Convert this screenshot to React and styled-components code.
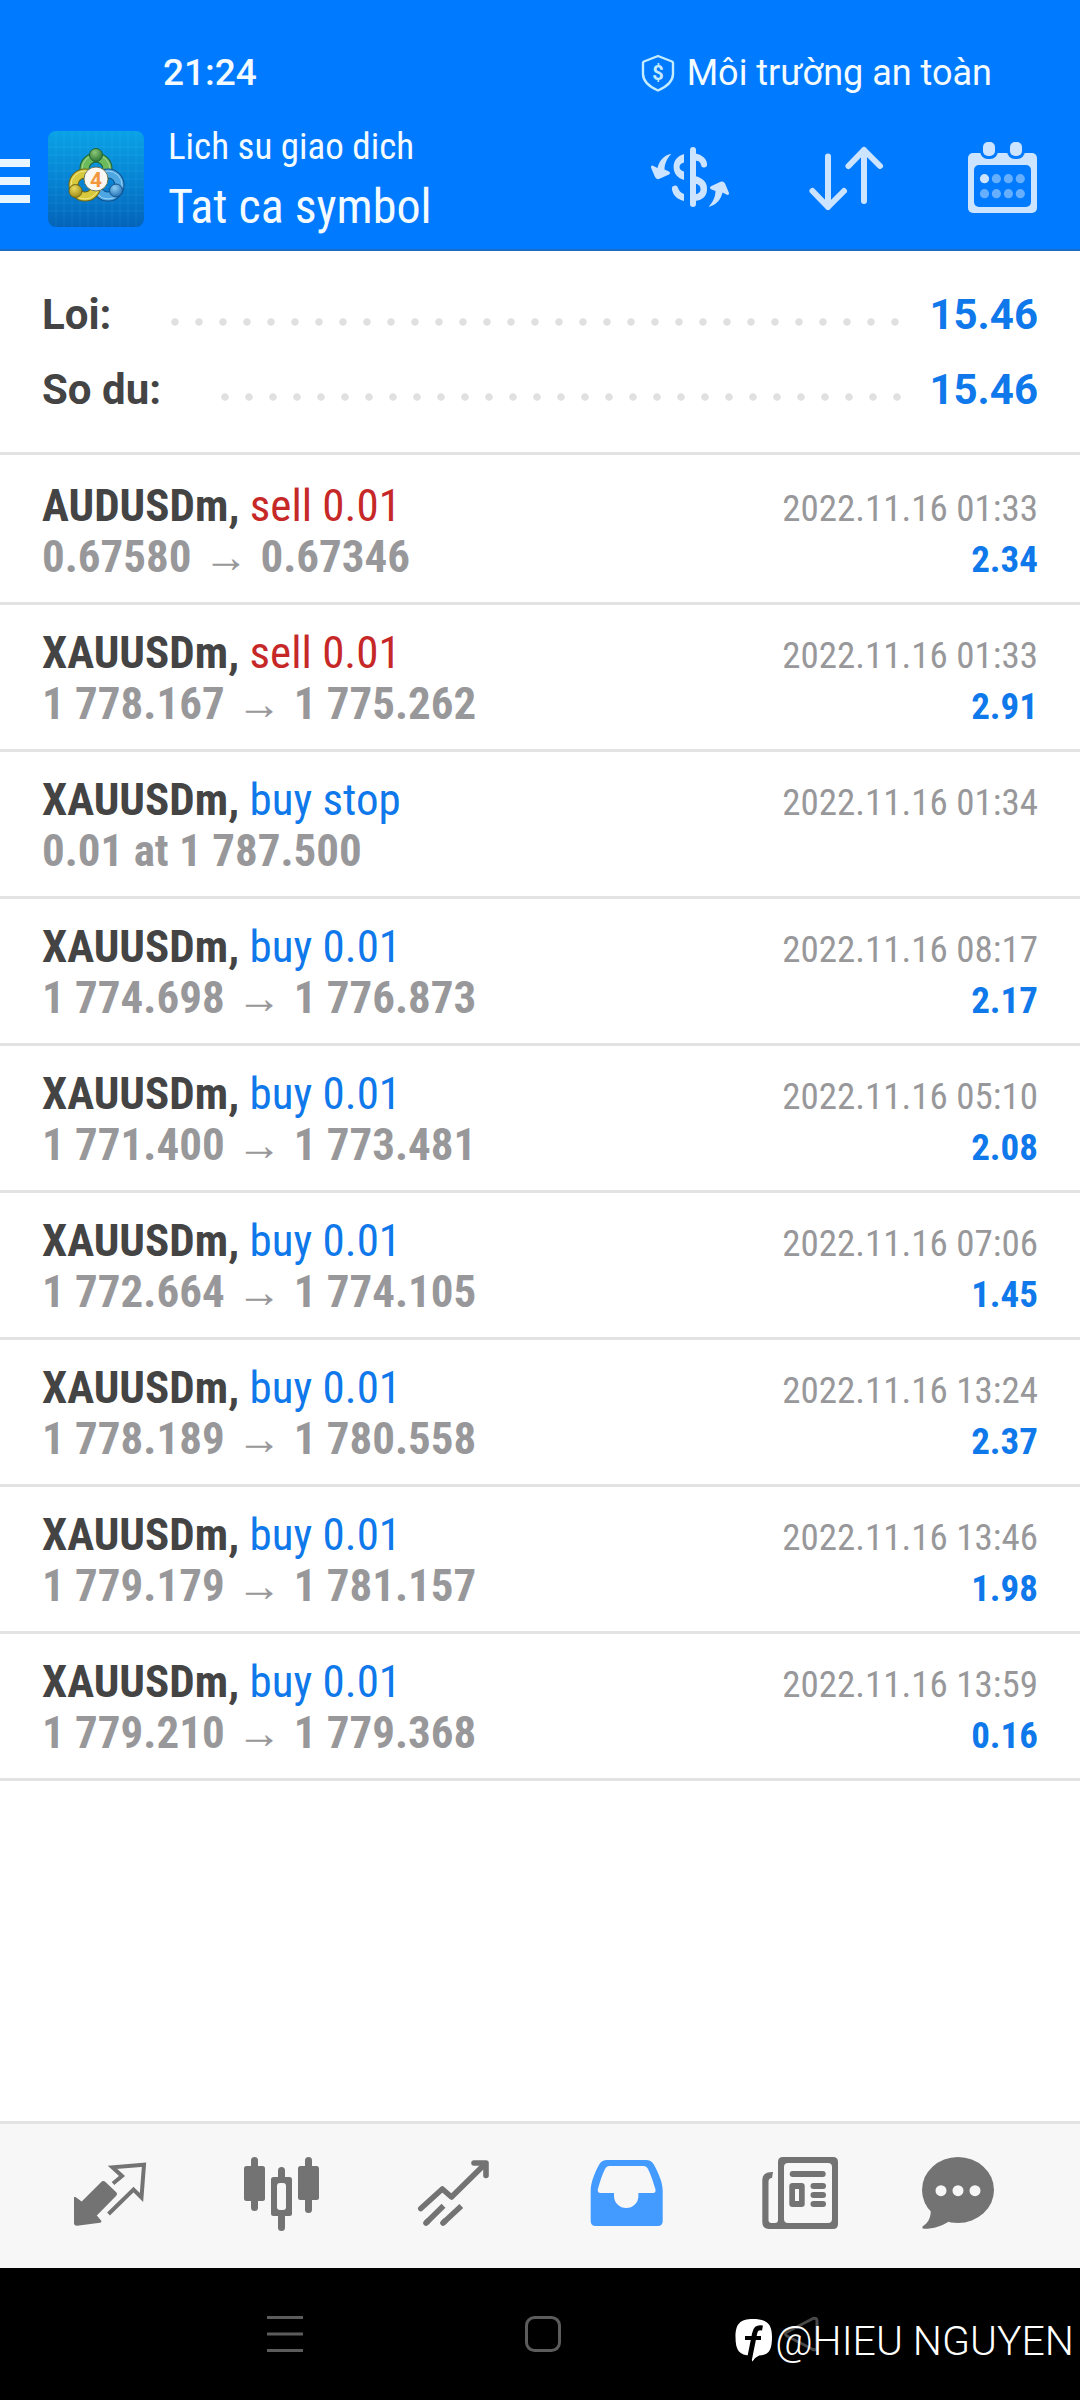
import React from 'react'
import styled, { createGlobalStyle } from 'styled-components'

const trades = [
  { symbol: 'AUDUSDm', side: 'sell', label: 'sell 0.01', from: '0.67580', to: '0.67346', time: '2022.11.16 01:33', profit: '2.34' },
  { symbol: 'XAUUSDm', side: 'sell', label: 'sell 0.01', from: '1 778.167', to: '1 775.262', time: '2022.11.16 01:33', profit: '2.91' },
  { symbol: 'XAUUSDm', side: 'buy', label: 'buy stop', from: '0.01 at 1 787.500', time: '2022.11.16 01:34' },
  { symbol: 'XAUUSDm', side: 'buy', label: 'buy 0.01', from: '1 774.698', to: '1 776.873', time: '2022.11.16 08:17', profit: '2.17' },
  { symbol: 'XAUUSDm', side: 'buy', label: 'buy 0.01', from: '1 771.400', to: '1 773.481', time: '2022.11.16 05:10', profit: '2.08' },
  { symbol: 'XAUUSDm', side: 'buy', label: 'buy 0.01', from: '1 772.664', to: '1 774.105', time: '2022.11.16 07:06', profit: '1.45' },
  { symbol: 'XAUUSDm', side: 'buy', label: 'buy 0.01', from: '1 778.189', to: '1 780.558', time: '2022.11.16 13:24', profit: '2.37' },
  { symbol: 'XAUUSDm', side: 'buy', label: 'buy 0.01', from: '1 779.179', to: '1 781.157', time: '2022.11.16 13:46', profit: '1.98' },
  { symbol: 'XAUUSDm', side: 'buy', label: 'buy 0.01', from: '1 779.210', to: '1 779.368', time: '2022.11.16 13:59', profit: '0.16' },
]

const totals = [
  { label: 'Loi:', value: '15.46' },
  { label: 'So du:', value: '15.46' },
]

function ShieldIcon() {
  return (
    <svg width="34" height="38" viewBox="0 0 34 38" fill="none" aria-hidden="true">
      <path d="M17 2 L31 7.5 Q32 8 32 9 V20 C32 28 25 33 17 36.5 C9 33 2 28 2 20 V9 Q2 8 3 7.5 Z" stroke="#c4ecff" strokeWidth="2.4" strokeLinejoin="round" />
      <text x="17" y="26" textAnchor="middle" fontFamily="Roboto, sans-serif" fontSize="20" fontWeight="700" fill="#c4ecff">$</text>
    </svg>
  )
}

function LogoIcon() {
  return (
    <svg width="96" height="96" viewBox="0 0 96 96" aria-hidden="true">
      <defs>
        <linearGradient id="tile" x1="0" y1="0" x2="0" y2="1">
          <stop offset="0" stopColor="#0aa2e6" />
          <stop offset="0.5" stopColor="#0684d4" />
          <stop offset="1" stopColor="#0463b8" />
        </linearGradient>
        <radialGradient id="green" cx="0.4" cy="0.3" r="0.8">
          <stop offset="0" stopColor="#8cc878" />
          <stop offset="1" stopColor="#1f6a2c" />
        </radialGradient>
        <radialGradient id="yellow" cx="0.4" cy="0.3" r="0.8">
          <stop offset="0" stopColor="#ecdc60" />
          <stop offset="1" stopColor="#94800e" />
        </radialGradient>
        <radialGradient id="blue" cx="0.4" cy="0.3" r="0.8">
          <stop offset="0" stopColor="#8ccdf4" />
          <stop offset="1" stopColor="#1565ac" />
        </radialGradient>
      </defs>
      <rect width="96" height="96" rx="8" fill="url(#tile)" />
      <path d="M8 0V96M16 0V96M24 0V96M32 0V96M40 0V96M48 0V96M56 0V96M64 0V96M72 0V96M80 0V96M88 0V96M0 16H96M0 24H96M0 32H96M0 40H96M0 48H96M0 56H96M0 64H96M0 72H96M0 80H96" stroke="#5fd0f0" strokeOpacity="0.14" />
      <g fill="none">
        <circle cx="48" cy="38" r="11.5" stroke="#1d6430" strokeWidth="10" />
        <circle cx="48" cy="38" r="11.5" stroke="#6cba5c" strokeWidth="8" />
        <circle cx="48" cy="38" r="14" stroke="#a8d898" strokeWidth="1" />
        <circle cx="60" cy="54" r="11.5" stroke="#12508c" strokeWidth="10" />
        <circle cx="60" cy="54" r="11.5" stroke="#4ea6e2" strokeWidth="8" />
        <circle cx="60" cy="54" r="14" stroke="#9cd4f6" strokeWidth="1" />
        <circle cx="37" cy="54" r="11.5" stroke="#6c6412" strokeWidth="10" />
        <circle cx="37" cy="54" r="11.5" stroke="#d8c83c" strokeWidth="8" />
        <circle cx="37" cy="54" r="14" stroke="#f0e88c" strokeWidth="1" />
      </g>
      <circle cx="48" cy="24" r="6.5" fill="url(#green)" stroke="#1d6430" />
      <circle cx="27.5" cy="60" r="6.5" fill="url(#yellow)" stroke="#6c6412" />
      <circle cx="68" cy="59.5" r="6.5" fill="url(#blue)" stroke="#12508c" />
      <circle cx="48" cy="48" r="12" fill="#fbf7f2" stroke="#6a7a5a" strokeWidth="1" />
      <text x="48" y="55.5" textAnchor="middle" fontFamily="Roboto, sans-serif" fontSize="21" fontWeight="700" fill="#f2983c">4</text>
    </svg>
  )
}

const turnArrow = 'M29.5 22.7 C22 24 17 30 15.5 37 L10.5 34.5 Q8.6 34.6 9 36.5 L13 46 Q14.5 49 17.5 47.8 L27 43.4 Q29 41.8 27 40.4 L22.5 38.5 C22.5 33 25 27 29.5 22.7 Z'

function CurrencyIcon() {
  return (
    <svg width="96" height="96" viewBox="0 0 96 96" fill="#cce4ff" aria-hidden="true">
      <path d="M51 19 V73" stroke="#cce4ff" strokeWidth="6" strokeLinecap="round" />
      <path d="M53 22.5 C60 23.5 65 28 65 33 A3 3 0 0 1 59 34 C58.5 31 57 30 53 29.5 Z" />
      <path d="M42 23 C35 25 31.6 30 31.6 36 C31.6 42 35 47 42 49 V40.5 C39 39.5 37.5 38 37.5 36 C37.5 34 39 32 42 31.5 Z" />
      <path d="M30 58.5 A3 3 0 0 1 36 57 C37 60 39 62 42 63 V70 C35 68.5 31 64 30 58.5 Z" />
      <path d="M53 45 C61 47 65 51 65 58 C65 65 61 69 53 70 V63.5 C57 62.5 58.5 61 58.5 58 C58.5 55 57 53.5 53 52.5 Z" />
      <path d={turnArrow} />
      <path d={turnArrow} transform="rotate(180 48 49.3)" />
    </svg>
  )
}

function SortIcon() {
  return (
    <svg width="96" height="96" viewBox="0 0 96 96" fill="none" stroke="#cce4ff" strokeWidth="6" strokeLinecap="round" strokeLinejoin="round" aria-hidden="true">
      <path d="M30 25.5 V76 M14.5 60 L30 76 L46 60" />
      <path d="M66 70 V19 M50.5 35 L66 19 L82 35" />
    </svg>
  )
}

function CalendarIcon() {
  return (
    <svg width="96" height="96" viewBox="0 0 96 96" aria-hidden="true">
      <rect x="14" y="22" width="69" height="60" rx="5" fill="#cce4ff" />
      <rect x="20" y="34" width="57" height="42" rx="5" fill="#007aff" />
      <rect x="26" y="8" width="18" height="20" rx="8" fill="#007aff" />
      <rect x="53" y="8" width="18" height="20" rx="8" fill="#007aff" />
      <rect x="29" y="11" width="12" height="14" rx="5" fill="#cce4ff" />
      <rect x="56" y="11" width="12" height="14" rx="5" fill="#cce4ff" />
      {[47.7, 62.7].map((y) =>
        [30.5, 42.4, 54.4, 66.3].map((x) => (
          <circle key={`${x}-${y}`} cx={x} cy={y} r="4.6" fill={x === 30.5 && y === 47.7 ? '#cce4ff' : '#66afff'} />
        ))
      )}
    </svg>
  )
}

function QuotesIcon() {
  return (
    <svg width="96" height="96" viewBox="0 0 96 96" aria-hidden="true">
      <path d="M12 49 L13.5 49 L19.7 53.5 L39 34.3 Q41 32 43.5 34 L54 44 Q56 46.3 54 48 L34.8 67.5 L39.5 73 Q39.5 74.5 38 74.7 L15 77.8 Q12 77.8 12 75 Z" fill="currentColor" />
      <path d="M51 35.5 L60 28 L50.5 19.3 L82 16.7 L79.5 49.5 L71.5 41.5 L46.5 66" fill="none" stroke="currentColor" strokeWidth="4" />
    </svg>
  )
}

function ChartIcon() {
  return (
    <svg width="96" height="96" viewBox="0 0 96 96" fill="currentColor" aria-hidden="true">
      <rect x="17" y="9" width="7" height="54" rx="3.5" />
      <rect x="10" y="18" width="21" height="35" rx="2.5" />
      <rect x="44" y="19" width="7" height="64" rx="3.5" />
      <rect x="37" y="29" width="21" height="39" rx="2.5" />
      <rect x="43" y="35" width="9" height="27" rx="3" fill="#f7f7f7" />
      <rect x="71" y="9" width="7" height="56" rx="3.5" />
      <rect x="64" y="18" width="21" height="34" rx="2.5" />
    </svg>
  )
}

function TradeIcon() {
  return (
    <svg width="96" height="96" viewBox="0 0 96 96" fill="none" stroke="currentColor" strokeWidth="5.6" strokeLinecap="round" strokeLinejoin="round" aria-hidden="true">
      <path d="M14.8 60.5 L36.3 41 L45.5 49 L79 16" />
      <path d="M68 15 H80 V27.5" />
      <path d="M20 75 L22 73 M37 75 L39 73" />
      <path d="M20 75 L37.5 57.7 M37 75 L55.3 58" strokeLinecap="butt" />
    </svg>
  )
}

function HistoryIcon() {
  return (
    <svg width="96" height="96" viewBox="0 0 96 96" fill="currentColor" aria-hidden="true">
      <path fillRule="evenodd" d="M29 12 H68 Q73 12 75.5 16 C80 24 84.7 34 84.7 43 V73 Q84.7 78 79.7 78 H17.7 Q12.7 78 12.7 73 V43 C12.7 34 17 24 21.5 16 Q24 12 29 12 Z M31.5 18 Q28.5 18 27 21 C24 27 21.5 35 19.8 41.5 Q19.5 45 22.5 45 H36 V48 A12.2 12 0 0 0 60.4 48 V45 H75 Q78 45 77.5 41.5 C75.5 35 73 27 70 21 Q68.5 18 65.5 18 Z" />
    </svg>
  )
}

function NewsIcon() {
  return (
    <svg width="96" height="96" viewBox="0 0 96 96" fill="currentColor" aria-hidden="true">
      <path fillRule="evenodd" d="M33 9 H83 Q88 9 88 14 V76 Q88 81 83 81 H19 Q12.3 81 12.3 74 V32 Q12.3 24 22 24 H23 L22 30 Q18.5 30 18.5 34 V72 Q18.5 75 21.5 75 H25 Q28 75 28 72 V14 Q28 9 33 9 Z M38 15 Q34 15 34 19 V71 Q34 75 38 75 H78 Q82 75 82 71 V19 Q82 15 78 15 Z" />
      <rect x="39.7" y="23" width="36" height="6" rx="3" />
      <path fillRule="evenodd" d="M42.5 35 H51.5 Q54.7 35 54.7 38 V56 Q54.7 59 51.5 59 H42.5 Q39.3 59 39.3 56 V38 Q39.3 35 42.5 35 Z M45 41 V53 H49 V41 Z" />
      <rect x="60.5" y="35" width="15.5" height="6" rx="3" />
      <rect x="60.5" y="44" width="15.5" height="6" rx="3" />
      <rect x="60.5" y="53" width="15.5" height="6" rx="3" />
    </svg>
  )
}

function ChatIcon() {
  return (
    <svg width="96" height="96" viewBox="0 0 96 96" fill="currentColor" aria-hidden="true">
      <ellipse cx="36" cy="42" rx="36" ry="33" />
      <path d="M8.7 62 C9 70 6 75 0.6 78.5 Q-0.2 80.6 2 80.8 C12 80.8 20 78 27 73.5 Z" />
      <g fill="#f7f7f7">
        <circle cx="19" cy="42.7" r="5.5" />
        <circle cx="36" cy="42.7" r="5.5" />
        <circle cx="53" cy="42.7" r="5.5" />
      </g>
    </svg>
  )
}

function FacebookIcon() {
  return (
    <svg width="38" height="44" viewBox="0 0 38 44" aria-hidden="true">
      <path d="M18 0 C32 0 37 5 37 18 C37 31 34 36 24 36.5 Q20 38 17.3 42.5 L16 36.5 C4 36.5 0.5 31 0.5 18 C0.5 5 5 0 18 0 Z" fill="#fff" />
      <path d="M27.5 9 C22 8 20.5 10 19.5 15 L14.5 40" fill="none" stroke="#000" strokeWidth="5" />
      <path d="M10 19 H26" stroke="#000" strokeWidth="4" />
      <path d="M19.5 31 L17.3 42.5 Q20 38 25 35.5 Z" fill="#fff" />
    </svg>
  )
}

const tabs = [
  { name: 'Quotes', Icon: QuotesIcon },
  { name: 'Chart', Icon: ChartIcon },
  { name: 'Trade', Icon: TradeIcon },
  { name: 'History', Icon: HistoryIcon, active: true },
  { name: 'News', Icon: NewsIcon },
  { name: 'Messages', Icon: ChatIcon },
]

function App() {
  return (
    <Page>
      <GlobalStyle />
      <Header>
        <StatusBar>
          <Clock>21:24</Clock>
          <Secure>
            <ShieldIcon />
            Môi trường an toàn
          </Secure>
        </StatusBar>
        <AppBar>
          <MenuButton aria-label="Menu">
            <span />
            <span />
            <span />
          </MenuButton>
          <LogoIcon />
          <Titles>
            <Subtitle>Lich su giao dich</Subtitle>
            <Title>Tat ca symbol</Title>
          </Titles>
          <Actions>
            <IconButton aria-label="Currency"><CurrencyIcon /></IconButton>
            <IconButton aria-label="Sort"><SortIcon /></IconButton>
            <IconButton aria-label="Period"><CalendarIcon /></IconButton>
          </Actions>
        </AppBar>
      </Header>

      <Summary>
        {totals.map((total) => (
          <SummaryRow key={total.label}>
            <dt>{total.label}</dt>
            <Leader aria-hidden="true" />
            <dd>{total.value}</dd>
          </SummaryRow>
        ))}
      </Summary>

      <TradeList>
        {trades.map((trade, index) => (
          <Trade key={index}>
            <Line>
              <Symbol>
                {trade.symbol}, <Side $side={trade.side}>{trade.label}</Side>
              </Symbol>
              <Time>{trade.time}</Time>
            </Line>
            <Line>
              <Prices>
                {trade.from}
                {trade.to && <Arrow>→</Arrow>}
                {trade.to}
              </Prices>
              <Profit>{trade.profit}</Profit>
            </Line>
          </Trade>
        ))}
      </TradeList>

      <TabBar>
        {tabs.map(({ name, Icon, active }) => (
          <Tab key={name} aria-label={name} $active={active}>
            <Icon />
          </Tab>
        ))}
      </TabBar>

      <SystemBar>
        <IconButton aria-label="Recent apps">
          <svg width="36" height="36" viewBox="0 0 36 36" stroke="#5c5c5c" strokeWidth="3">
            <path d="M0 1.5 H36 M0 18 H36 M0 34.5 H36" />
          </svg>
        </IconButton>
        <IconButton aria-label="Home">
          <svg width="36" height="36" viewBox="0 0 36 36" fill="none" stroke="#5c5c5c" strokeWidth="3">
            <rect x="1.5" y="1.5" width="33" height="33" rx="8" />
          </svg>
        </IconButton>
        <IconButton aria-label="Back">
          <svg width="36" height="36" viewBox="0 0 36 36" fill="none" stroke="#484848" strokeWidth="3" strokeLinejoin="round">
            <path d="M30 2.5 Q34 1.5 34 5 V31 Q34 34.5 30 33.5 L4 20 Q1 18 4 16 Z" />
          </svg>
        </IconButton>
        <Watermark>
          <FacebookIcon />
          @HIEU NGUYEN
        </Watermark>
      </SystemBar>
    </Page>
  )
}

export default App


// Styled Components
const GlobalStyle = createGlobalStyle`
  * {
    box-sizing: border-box;
  }

  body {
    margin: 0;
    background: #fff;
    font-family: Roboto, sans-serif;
  }

  svg {
    display: block;
    flex-shrink: 0;
  }
`

const condensed = `"Roboto Condensed", Roboto, sans-serif`

const Page = styled.div`
  display: flex;
  flex-direction: column;
  min-height: 100vh;
`

const Header = styled.header`
  background: #007aff;
  border-bottom: 2px solid #1a6cc4;
  color: #f4fbff;
`

const StatusBar = styled.div`
  display: flex;
  align-items: center;
  justify-content: space-between;
  height: 109px;
  padding: 36px 88px 0 163px;
  font-size: 36px;
`

const Clock = styled.time`
  font-size: 37px;
  font-weight: 500;
`

const Secure = styled.div`
  display: flex;
  align-items: center;
  gap: 12px;
`

const AppBar = styled.div`
  display: flex;
  align-items: center;
  height: 140px;
  padding-right: 30px;
`

const IconButton = styled.button`
  display: flex;
  align-items: center;
  justify-content: center;
  padding: 0;
  border: 0;
  background: none;
  cursor: pointer;
`

const MenuButton = styled(IconButton)`
  flex-direction: column;
  gap: 10px;
  width: 30px;
  margin-right: 18px;
  padding-top: 4px;

  span {
    width: 100%;
    height: 8px;
    background: #eaf6ff;
  }
`

const Titles = styled.div`
  margin-left: 24px;
  padding-bottom: 4px;
  font-family: ${condensed};
  line-height: 60px;
`

const Subtitle = styled.div`
  font-size: 37px;
`

const Title = styled.h1`
  margin: 0;
  font-size: 48px;
  font-weight: 400;
`

const Actions = styled.div`
  display: flex;
  gap: 60px;
  margin-left: auto;
`

const Summary = styled.dl`
  margin: 0;
  padding: 26px 42px 25px;
  border-bottom: 3px solid #e3e3e3;
`

const SummaryRow = styled.div`
  display: flex;
  align-items: center;
  height: 75px;
  font-size: 42px;
  font-weight: 700;
  color: #444;

  dd {
    margin: 0;
    color: #0f78ea;
  }
`

const Leader = styled.span`
  flex: 1;
  height: 22px;
  margin: 0 22px 0 60px;
  background: radial-gradient(4px 4px at 4px 4px, #e0e0e0 85%, transparent 100%) left bottom / 24px 8px repeat-x;
`

const TradeList = styled.ul`
  flex: 1;
  margin: 0;
  padding: 3px 0 0;
  list-style: none;
`

const Trade = styled.li`
  padding: 22px 42px 20px;
  border-bottom: 3px solid #e3e3e3;
  font-family: ${condensed};
`

const Line = styled.div`
  display: flex;
  align-items: baseline;
  justify-content: space-between;
  height: 51px;
  line-height: 51px;
`

const Symbol = styled.span`
  font-size: 45px;
  font-weight: 700;
  color: #444;
`

const Side = styled.span`
  font-weight: 400;
  color: ${(props) => (props.$side === 'sell' ? '#c62828' : '#0f78ea')};
`

const Prices = styled.span`
  font-size: 45px;
  font-weight: 700;
  color: #98989b;
`

const Arrow = styled.span`
  margin: 0 12px;
`

const Time = styled.time`
  font-size: 37px;
  color: #98989b;
`

const Profit = styled.span`
  font-size: 37px;
  font-weight: 700;
  color: #0f78ea;
`

const TabBar = styled.nav`
  display: grid;
  grid-template-columns: repeat(6, 1fr);
  height: 147px;
  padding: 0 24px;
  border-top: 3px solid #e3e3e3;
  background: #f7f7f7;
`

const Tab = styled(IconButton)`
  color: ${(props) => (props.$active ? '#439bff' : '#737373')};
`

const SystemBar = styled.div`
  position: relative;
  display: grid;
  grid-template-columns: repeat(3, 1fr);
  height: 132px;
  padding: 0 150px 0 156px;
  background: #000;
`

const Watermark = styled.div`
  position: absolute;
  top: 14px;
  right: 6px;
  bottom: 0;
  display: flex;
  align-items: center;
  gap: 2px;
  font-size: 41px;
  font-weight: 300;
  color: #fff;
`
